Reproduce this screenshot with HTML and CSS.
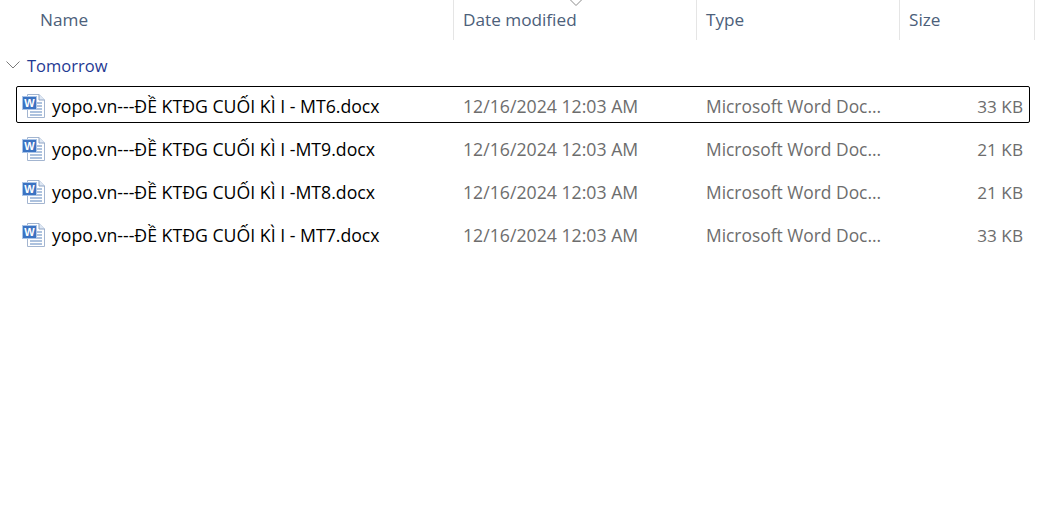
FILE: index.html
```html
<!DOCTYPE html>
<html lang="en">
<head>
    <meta charset="UTF-8">
    <title>Tomorrow</title>
    <link rel="stylesheet" href="styles.css">
</head>
<body>
<div class="header">
    <svg class="sort" width="12" height="6" viewBox="0 0 12 6"><path d="M.5 0L6 5.5L11.5 0" fill="none" stroke="#8a8a8a"/></svg>
    <div class="head-cell head-name">Name</div>
    <div class="head-cell">Date modified</div>
    <div class="head-cell">Type</div>
    <div class="head-cell">Size</div>
</div>
<div class="group">
    <svg width="14" height="8" viewBox="0 0 14 8"><path d="M.5 .5L7 7L13.5 .5" fill="none" stroke="#7a7a7a"/></svg>
    <span>Tomorrow</span>
</div>
<div class="rows">
    <div class="row selected">
        <div class="name">
            <svg class="icon" viewBox="0 0 24 24">
                <path d="M5.5 .5H17L22.5 6V23.5H5.5Z" fill="#fff" stroke="#a3b5d0"/>
                <path d="M17 .5V6H22.5" fill="#dfe8f4" stroke="#8ea4c4"/>
                <path d="M15 9H20M15 12H20M15 15H20M8 18H20M8 21H20" stroke="#93aed4" stroke-width="1.3"/>
                <rect x=".5" y="2.5" width="14" height="13" fill="#3b73c2" stroke="#a9c4e8"/>
                <text x="7.5" y="13" class="word-w">W</text>
            </svg>
            yopo.vn---ĐỀ KTĐG CUỐI KÌ I - MT6.docx
        </div>
        <div class="info">12/16/2024 12:03 AM</div>
        <div class="info type">Microsoft Word Doc...</div>
        <div class="info size">33 KB</div>
    </div>
    <div class="row">
        <div class="name">
            <svg class="icon" viewBox="0 0 24 24">
                <path d="M5.5 .5H17L22.5 6V23.5H5.5Z" fill="#fff" stroke="#a3b5d0"/>
                <path d="M17 .5V6H22.5" fill="#dfe8f4" stroke="#8ea4c4"/>
                <path d="M15 9H20M15 12H20M15 15H20M8 18H20M8 21H20" stroke="#93aed4" stroke-width="1.3"/>
                <rect x=".5" y="2.5" width="14" height="13" fill="#3b73c2" stroke="#a9c4e8"/>
                <text x="7.5" y="13" class="word-w">W</text>
            </svg>
            yopo.vn---ĐỀ KTĐG CUỐI KÌ I -MT9.docx
        </div>
        <div class="info">12/16/2024 12:03 AM</div>
        <div class="info type">Microsoft Word Doc...</div>
        <div class="info size">21 KB</div>
    </div>
    <div class="row">
        <div class="name">
            <svg class="icon" viewBox="0 0 24 24">
                <path d="M5.5 .5H17L22.5 6V23.5H5.5Z" fill="#fff" stroke="#a3b5d0"/>
                <path d="M17 .5V6H22.5" fill="#dfe8f4" stroke="#8ea4c4"/>
                <path d="M15 9H20M15 12H20M15 15H20M8 18H20M8 21H20" stroke="#93aed4" stroke-width="1.3"/>
                <rect x=".5" y="2.5" width="14" height="13" fill="#3b73c2" stroke="#a9c4e8"/>
                <text x="7.5" y="13" class="word-w">W</text>
            </svg>
            yopo.vn---ĐỀ KTĐG CUỐI KÌ I -MT8.docx
        </div>
        <div class="info">12/16/2024 12:03 AM</div>
        <div class="info type">Microsoft Word Doc...</div>
        <div class="info size">21 KB</div>
    </div>
    <div class="row">
        <div class="name">
            <svg class="icon" viewBox="0 0 24 24">
                <path d="M5.5 .5H17L22.5 6V23.5H5.5Z" fill="#fff" stroke="#a3b5d0"/>
                <path d="M17 .5V6H22.5" fill="#dfe8f4" stroke="#8ea4c4"/>
                <path d="M15 9H20M15 12H20M15 15H20M8 18H20M8 21H20" stroke="#93aed4" stroke-width="1.3"/>
                <rect x=".5" y="2.5" width="14" height="13" fill="#3b73c2" stroke="#a9c4e8"/>
                <text x="7.5" y="13" class="word-w">W</text>
            </svg>
            yopo.vn---ĐỀ KTĐG CUỐI KÌ I - MT7.docx
        </div>
        <div class="info">12/16/2024 12:03 AM</div>
        <div class="info type">Microsoft Word Doc...</div>
        <div class="info size">33 KB</div>
    </div>
</div>
</body>
</html>
```

FILE: styles.css
```css
body {
    margin: 0;
    background-color: white;
    font-family: "Open Sans", "Noto Sans", sans-serif;
    font-size: 16.5px;
}

.word-w {
    font-family: "Liberation Sans", sans-serif;
    font-size: 11px;
    font-weight: bold;
    fill: white;
    text-anchor: middle;
}

.header {
    display: grid;
    grid-template-columns: 454px 243px 203px 135px;
    height: 39px;
    position: relative;
    font-size: 17.2px;
}

.sort {
    position: absolute;
    left: 570px;
    top: 0;
}

.head-cell {
    border-right: 1px solid #e5e5e5;
    padding-left: 9px;
    line-height: 40px;
    color: #4c607a;
}

.head-name {
    padding-left: 40px;
}

.group {
    display: flex;
    align-items: center;
    gap: 7px;
    height: 26px;
    padding-left: 6px;
    margin-top: 13px;
    color: #1f3a93;
}

.rows {
    margin-top: 8px;
    margin-left: 16px;
    width: 1014px;
}

.row {
    display: grid;
    grid-template-columns: 436px 243px 203px 1fr;
    align-items: center;
    height: 37px;
    margin-bottom: 6px;
    padding-top: 3px;
    border: 1px solid transparent;
    border-radius: 2px;
    box-sizing: border-box;
    font-size: 17.7px;
}

.selected {
    border-color: black;
}

.name {
    display: flex;
    align-items: center;
    gap: 6px;
    padding-left: 5px;
    color: black;
    white-space: nowrap;
}

.icon {
    width: 24px;
    height: 24px;
    flex: none;
}

.info {
    padding-left: 10px;
    color: #6d6d6d;
    white-space: nowrap;
}

.type {
    font-size: 17.4px;
}

.size {
    text-align: right;
    padding-right: 6px;
    font-size: 17.2px;
}
```
